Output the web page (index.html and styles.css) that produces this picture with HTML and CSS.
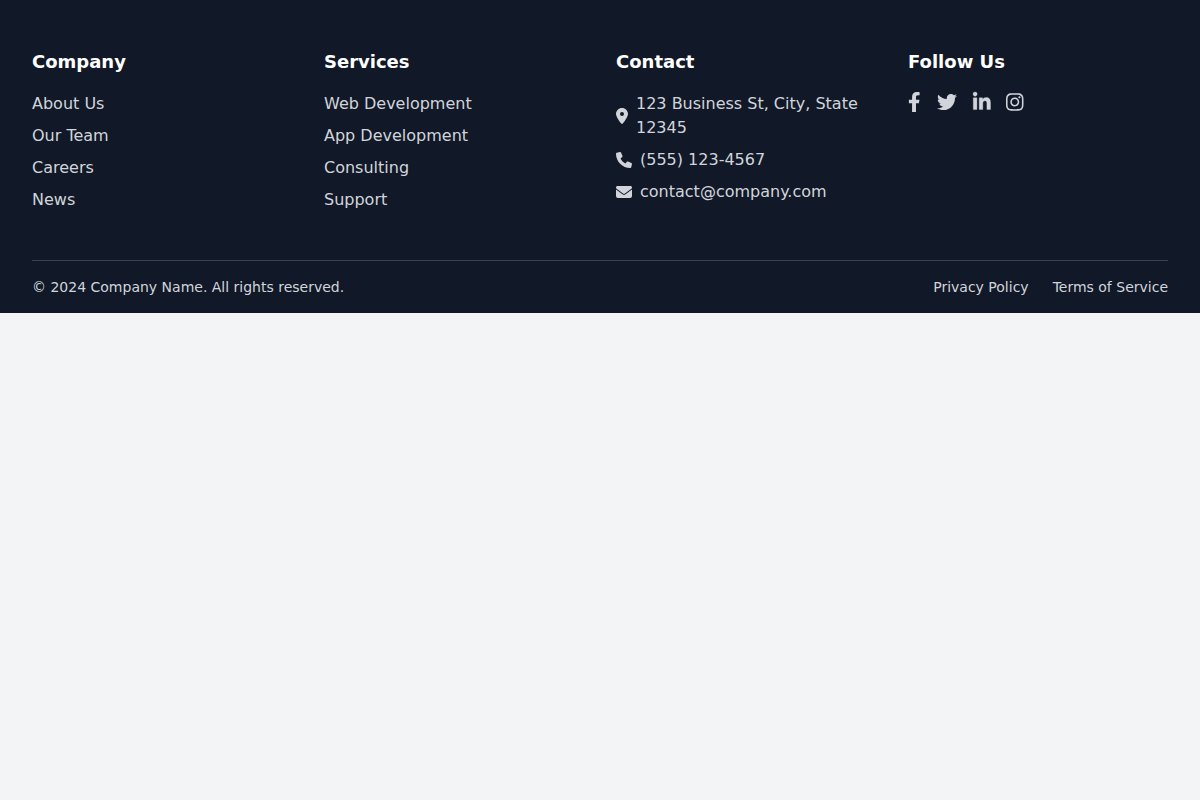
FILE: index.html
```html
<!DOCTYPE html>
<html lang="en">
<head>
<meta charset="utf-8">
<meta name="viewport" content="width=device-width, initial-scale=1">
<title>Company Name</title>
<link rel="stylesheet" href="styles.css">
</head>
<body>
<footer class="footer">
  <div class="footer-columns">
    <section>
      <h3 class="footer-title">Company</h3>
      <ul class="footer-list">
        <li><a href="#">About Us</a></li>
        <li><a href="#">Our Team</a></li>
        <li><a href="#">Careers</a></li>
        <li><a href="#">News</a></li>
      </ul>
    </section>
    <section>
      <h3 class="footer-title">Services</h3>
      <ul class="footer-list">
        <li><a href="#">Web Development</a></li>
        <li><a href="#">App Development</a></li>
        <li><a href="#">Consulting</a></li>
        <li><a href="#">Support</a></li>
      </ul>
    </section>
    <section>
      <h3 class="footer-title">Contact</h3>
      <ul class="footer-list">
        <li class="contact-item">
          <svg class="contact-icon" viewBox="0 0 384 512" aria-hidden="true"><path d="M215.7 499.2C267 435 384 279.4 384 192C384 86 298 0 192 0S0 86 0 192c0 87.400 117 243 168.300 307.200c12.300 15.300 35.100 15.300 47.400 0zM192 128a64 64 0 1 1 0 128 64 64 0 1 1 0-128z"/></svg>
          <span>123 Business St, City, State 12345</span>
        </li>
        <li class="contact-item">
          <svg class="contact-icon" viewBox="0 0 512 512" aria-hidden="true"><path d="M511.2 387l-23.250 100.800c-3.266 14.250-15.790 24.220-30.460 24.220C205.200 512 0 306.800 0 54.500c0-14.660 9.969-27.200 24.220-30.450l100.800-23.250C139.700-2.602 154.700 5.018 160.800 18.920l46.520 108.500c5.438 12.780 1.770 27.670-8.980 36.450L144.500 207.100c33.980 69.220 90.260 125.500 159.500 159.500l44.080-53.800c8.688-10.780 23.690-14.510 36.470-8.975l108.500 46.510C506.100 357.200 514.600 372.400 511.200 387z"/></svg>
          <span>(555) 123-4567</span>
        </li>
        <li class="contact-item">
          <svg class="contact-icon" viewBox="0 0 512 512" aria-hidden="true"><path d="M48 64C21.500 64 0 85.500 0 112c0 15.100 7.100 29.300 19.200 38.400L236.800 313.600c11.400 8.500 27 8.500 38.400 0L492.800 150.400c12.100-9.100 19.200-23.300 19.200-38.400c0-26.500-21.500-48-48-48H48zM0 176V384c0 35.300 28.700 64 64 64H448c35.300 0 64-28.700 64-64V176L294.400 339.200c-22.800 17.100-54 17.100-76.800 0L0 176z"/></svg>
          <span>contact@company.com</span>
        </li>
      </ul>
    </section>
    <section>
      <h3 class="footer-title">Follow Us</h3>
      <div class="social-links">
        <a href="#" aria-label="Facebook"><svg class="social-icon" viewBox="0 0 320 512" aria-hidden="true"><path d="M279.140 288l14.220-92.660h-88.910v-60.130c0-25.350 12.420-50.060 52.240-50.060h40.420V6.260S260.430 0 225.360 0c-73.220 0-121.080 44.380-121.080 124.720v70.620H22.890V288h81.390v224h100.170V288z"/></svg></a>
        <a href="#" aria-label="Twitter"><svg class="social-icon" viewBox="0 0 512 512" aria-hidden="true"><path d="M459.370 151.716c.325 4.548.325 9.097.325 13.645 0 138.720-105.583 298.558-298.558 298.558-59.452 0-114.680-17.219-161.137-47.106 8.447.974 16.568 1.299 25.340 1.299 49.055 0 94.213-16.568 130.274-44.832-46.132-.975-84.792-31.188-98.112-72.772 6.498.974 12.995 1.624 19.818 1.624 9.421 0 18.843-1.300 27.614-3.573-48.081-9.747-84.143-51.980-84.143-102.985v-1.299c13.969 7.797 30.214 12.670 47.431 13.319-28.264-18.843-46.781-51.005-46.781-87.391 0-19.492 5.197-37.360 14.294-52.954 51.655 63.675 129.300 105.258 216.365 109.807-1.624-7.797-2.599-15.918-2.599-24.040 0-57.828 46.782-104.934 104.934-104.934 30.213 0 57.502 12.670 76.670 33.137 23.715-4.548 46.456-13.320 66.599-25.340-7.798 24.366-24.366 44.833-46.132 57.827 21.117-2.273 41.584-8.122 60.426-16.243-14.292 20.791-32.161 39.308-52.628 54.253z"/></svg></a>
        <a href="#" aria-label="LinkedIn"><svg class="social-icon social-icon-bold" viewBox="0 0 448 512" aria-hidden="true"><path d="M100.280 448H7.400V148.900h92.880zM53.790 108.100C24.090 108.100 0 83.500 0 53.800a53.790 53.790 0 0 1 107.580 0c0 29.700-24.100 54.300-53.790 54.300zM447.900 448h-92.680V302.400c0-34.700-.7-79.200-48.290-79.200-48.290 0-55.690 37.700-55.690 76.700V448h-92.780V148.900h89.080v40.800h1.300c12.400-23.500 42.690-48.300 87.880-48.300 94 0 111.280 61.900 111.280 142.300V448z"/></svg></a>
        <a href="#" aria-label="Instagram"><svg class="social-icon" viewBox="0 0 448 512" aria-hidden="true"><path d="M224.100 141c-63.600 0-114.900 51.300-114.900 114.900s51.300 114.900 114.900 114.900S339 319.500 339 255.900 287.700 141 224.100 141zm0 189.600c-41.100 0-74.700-33.500-74.700-74.700s33.500-74.700 74.700-74.700 74.700 33.500 74.700 74.700-33.600 74.700-74.700 74.700zm146.400-194.300c0 14.900-12 26.800-26.800 26.800-14.900 0-26.800-12-26.800-26.800s12-26.800 26.800-26.800 26.800 12 26.800 26.800zm76.100 27.200c-1.700-35.900-9.900-67.700-36.200-93.900-26.200-26.200-58-34.400-93.900-36.200-37-2.100-147.900-2.100-184.900 0-35.800 1.700-67.600 9.900-93.900 36.100s-34.400 58-36.200 93.900c-2.100 37-2.100 147.900 0 184.900 1.700 35.900 9.900 67.700 36.200 93.900s58 34.400 93.900 36.200c37 2.100 147.900 2.100 184.900 0 35.900-1.700 67.700-9.900 93.900-36.200 26.200-26.200 34.400-58 36.200-93.900 2.100-37 2.100-147.800 0-184.800zM398.800 388c-7.800 19.600-22.900 34.700-42.600 42.600-29.500 11.700-99.500 9-132.100 9s-102.700 2.600-132.100-9c-19.600-7.800-34.700-22.900-42.600-42.600-11.700-29.500-9-99.500-9-132.100s-2.600-102.700 9-132.100c7.800-19.600 22.900-34.700 42.600-42.600 29.500-11.700 99.500-9 132.100-9s102.700-2.600 132.100 9c19.600 7.800 34.700 22.900 42.600 42.600 11.700 29.500 9 99.500 9 132.100s2.700 102.700-9 132.100z"/></svg></a>
      </div>
    </section>
  </div>
  <div class="footer-bottom">
    <p class="copyright">© 2024 Company Name. All rights reserved.</p>
    <nav class="legal-links">
      <a href="#">Privacy Policy</a>
      <a href="#">Terms of Service</a>
    </nav>
  </div>
</footer>
</body>
</html>
```
FILE: styles.css
```css
* {
  box-sizing: border-box;
}

body {
  margin: 0;
  background: #f3f4f6;
  font-family: "DejaVu Sans", sans-serif;
  font-size: 16px;
  line-height: 24px;
}

.footer {
  padding: 48px 32px 16px;
  background: #111827;
  color: #d1d5db;
}

.footer a {
  color: inherit;
  text-decoration: none;
}

.footer a:hover {
  color: #ffffff;
}

.footer-columns {
  display: grid;
  grid-template-columns: repeat(4, minmax(0, 1fr));
  gap: 32px;
}

.footer-title {
  margin: 0 0 16px;
  color: #ffffff;
  font-size: 18px;
  line-height: 28px;
  font-weight: 700;
}

.footer-list {
  display: flex;
  flex-direction: column;
  gap: 8px;
  margin: 0;
  padding: 0;
  list-style: none;
}

.contact-item {
  display: flex;
  align-items: center;
  gap: 8px;
}

.contact-icon,
.social-icon {
  flex: none;
  overflow: visible;
  fill: currentColor;
}

.contact-icon {
  height: 16px;
}

.social-links {
  display: flex;
  gap: 16px;
}

.social-links a {
  display: flex;
}

.social-icon {
  height: 20px;
}

.social-icon-bold {
  stroke: currentColor;
  stroke-width: 8;
}

.footer-bottom {
  display: flex;
  justify-content: space-between;
  align-items: center;
  margin-top: 48px;
  padding-top: 16px;
  border-top: 1px solid #374151;
  font-size: 14px;
  line-height: 20px;
}

.copyright {
  margin: 0;
}

.legal-links {
  display: flex;
  gap: 24px;
}

@media (max-width: 767px) {
  .footer-columns {
    grid-template-columns: minmax(0, 1fr);
  }

  .footer-bottom {
    flex-direction: column;
    gap: 16px;
  }
}
```
